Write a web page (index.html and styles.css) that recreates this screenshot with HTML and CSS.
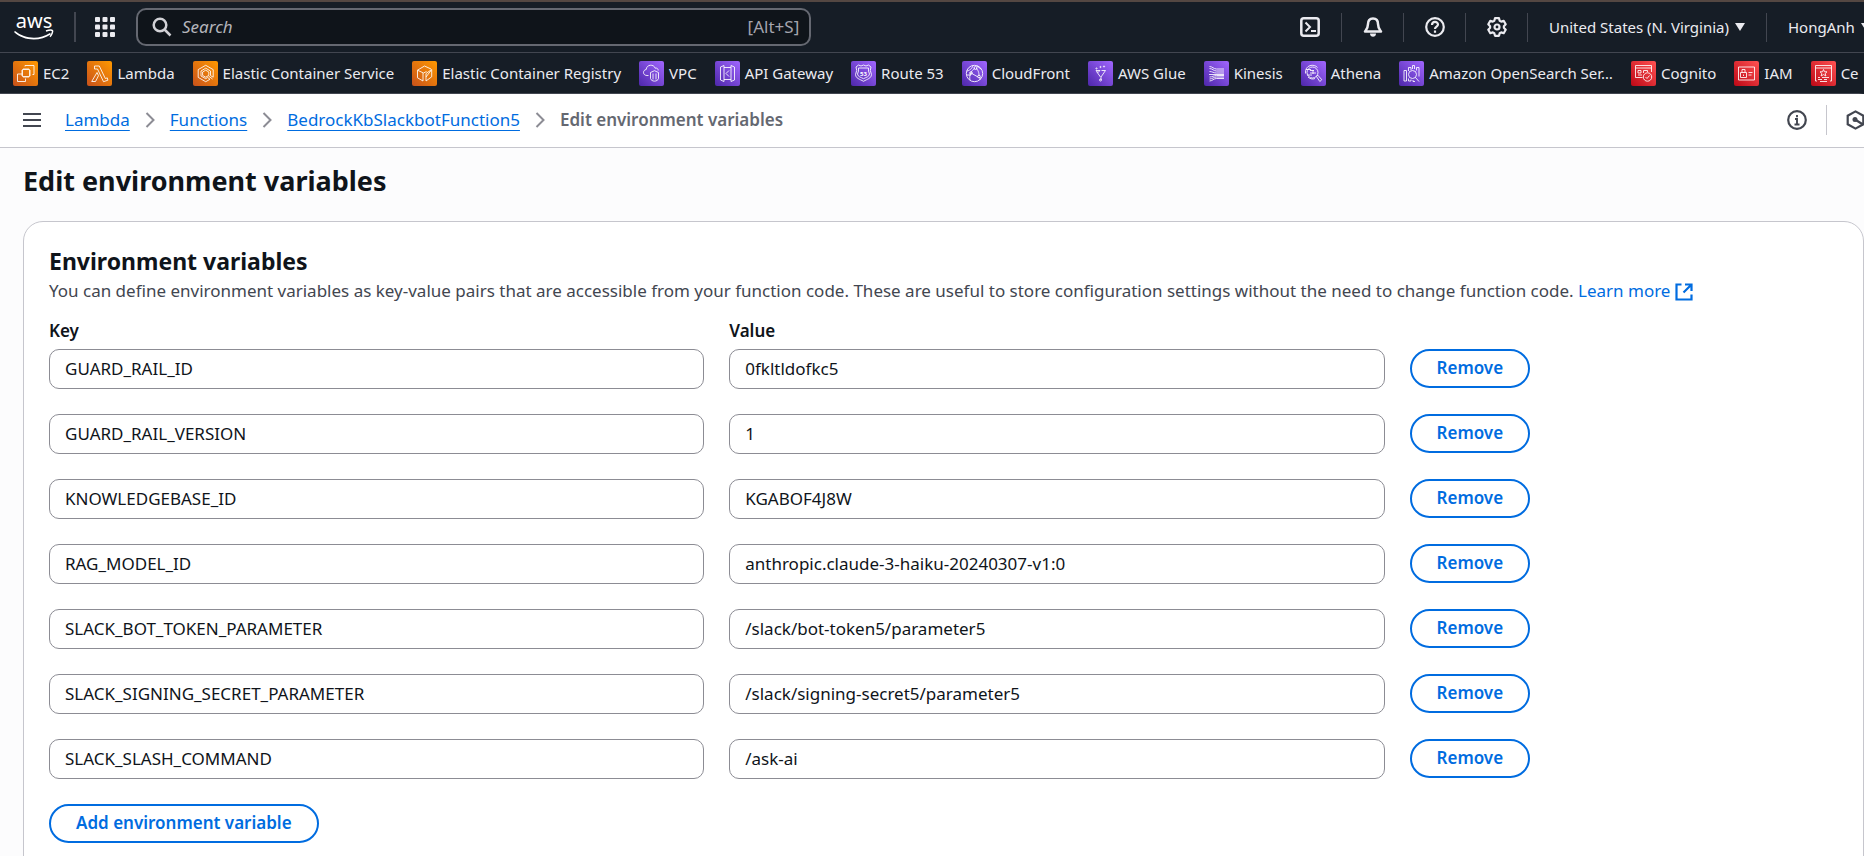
FILE: index.html
```html
<!DOCTYPE html>
<html lang="en">
<head>
<meta charset="utf-8">
<title>Edit environment variables - Lambda</title>
<link rel="stylesheet" href="styles.css">
</head>
<body>
<svg class="defs" aria-hidden="true">
  <defs>
    <linearGradient id="orange" x1="0" y1="1" x2="1" y2="0"><stop offset="0" stop-color="#c8511b"/><stop offset="1" stop-color="#ff9900"/></linearGradient>
    <linearGradient id="purple" x1="0" y1="1" x2="1" y2="0"><stop offset="0" stop-color="#4d27aa"/><stop offset="1" stop-color="#a166ff"/></linearGradient>
    <linearGradient id="red" x1="0" y1="1" x2="1" y2="0"><stop offset="0" stop-color="#bd0816"/><stop offset="1" stop-color="#ff5252"/></linearGradient>
  </defs>
</svg>

<header class="topbar">
  <a class="logo" href="#" aria-label="AWS home">
    <svg width="40" height="30" viewBox="0 0 40 30"><text class="logo-text" x="20" y="16" text-anchor="middle">aws</text><path d="M1 19c10 8 24 9 35 2l1 1.200C26 30 9 29 0 20z" fill="#fff"/><path d="M32 19c3-1 6-1 6.500-.3.500 1-.6 4-2.500 6" fill="none" stroke="#fff" stroke-width="1.500"/></svg>
  </a>
  <button class="services" type="button" aria-label="Services">
    <svg width="20" height="20" viewBox="0 0 20 20" fill="#ebebf0"><rect width="5" height="5" rx="1"/><rect x="7.500" width="5" height="5" rx="1"/><rect x="15" width="5" height="5" rx="1"/><rect y="7.500" width="5" height="5" rx="1"/><rect x="7.500" y="7.500" width="5" height="5" rx="1"/><rect x="15" y="7.500" width="5" height="5" rx="1"/><rect y="15" width="5" height="5" rx="1"/><rect x="7.500" y="15" width="5" height="5" rx="1"/><rect x="15" y="15" width="5" height="5" rx="1"/></svg>
  </button>
  <label class="search">
    <svg width="20" height="20" viewBox="0 0 20 20" fill="none" stroke="#d1d1d6" stroke-width="2.500"><circle cx="8" cy="8" r="6.300"/><path d="M12.500 12.500l6 6"/></svg>
    <input type="text" placeholder="Search" aria-label="Search">
    <span class="hint">[Alt+S]</span>
  </label>
  <nav class="tools">
    <button type="button" aria-label="CloudShell"><svg width="20" height="20" viewBox="0 0 20 20" fill="none" stroke="#ebebf0" stroke-width="2.500"><rect x="1.300" y="1.300" width="17.400" height="17.400" rx="2.500"/><path d="M5.500 5.500l4.500 4.500-4.500 4.500M11 14h5" stroke-width="2"/></svg></button>
    <button type="button" aria-label="Notifications"><svg width="20" height="20" viewBox="0 0 20 20" fill="none" stroke="#ebebf0" stroke-width="2.500" stroke-linejoin="round"><path d="M10 1.500c-3.600 0-5 2.500-5 5.500 0 4-1.500 5.500-3 7.500h16c-1.500-2-3-3.500-3-7.500 0-3-1.400-5.500-5-5.500z"/><path d="M7 16.500h6c0 4.300-6 4.300-6 0z" fill="#ebebf0" stroke="none"/></svg></button>
    <button type="button" aria-label="Help"><svg width="20" height="20" viewBox="0 0 20 20" fill="none" stroke="#ebebf0" stroke-width="2.200"><circle cx="10" cy="10" r="8.800"/><path d="M7 8c0-4 6-4 6-.5 0 2.200-3 2-3 4.500"/><path d="M10 13.500v2.300"/></svg></button>
    <button type="button" aria-label="Settings"><svg width="20" height="20" viewBox="0 0 20 20" fill="none" stroke="#ebebf0" stroke-width="2.200" stroke-linejoin="round"><path d="M8 1.200h4l.7 2.600 1.500.8 2.500-.8 2 3.400-1.800 2v1.600l1.800 2-2 3.400-2.500-.8-1.500.8-.7 2.600H8l-.7-2.600-1.500-.8-2.500.8-2-3.400 1.800-2V9.200l-1.800-2 2-3.400 2.500.8 1.500-.8z"/><circle cx="10" cy="10" r="2.500"/></svg></button>
    <button type="button" class="region">United States (N. Virginia)<svg width="10" height="8" viewBox="0 0 10 8"><path d="M0 0h10L5 8z" fill="#ebebf0"/></svg></button>
    <button type="button" class="account">HongAnh<svg width="10" height="8" viewBox="0 0 10 8"><path d="M0 0h10L5 8z" fill="#ebebf0"/></svg></button>
  </nav>
</header>

<nav class="favorites" aria-label="Favorites">
  <a href="#"><svg class="svc" viewBox="0 0 25 25"><rect width="25" height="25" rx="2" fill="url(#orange)"/><path d="M12 5.500V4.500h9v9h-1.500M9.500 13H4.500v7.500h8v-3M9.500 8.500h7v7h-7zM11 8.500V7M13 8.500V7M15 8.500V7M11 17v-1.500M13 17v-1.500M15 17v-1.500M8 10h1.500M8 12h1.500M8 14h1.500M16.500 10H18M16.500 12H18M16.500 14H18"/></svg>EC2</a>
  <a href="#"><svg class="svc" viewBox="0 0 25 25"><rect width="25" height="25" rx="2" fill="url(#orange)"/><path d="M7.500 5h4.800l6 12.500 2-.6.600 2.300-4.400 1.500-6-12.700H7.500zM10 11.500l1.500 3.200-3 5.800H4.700z"/></svg>Lambda</a>
  <a href="#"><svg class="svc" viewBox="0 0 25 25"><rect width="25" height="25" rx="2" fill="url(#orange)"/><path d="M17 18.300l-4.300 2.400-7.500-4.300V8.600l7.500-4.300 7.500 4.300v7.600l-2.700-1.600V10L12.700 7.200 8 10v5l4.700 2.700 2-1.200zM12.700 9.200l3.100 1.800v3.400l-3.100 1.800-3.100-1.800V11zM15.500 15l4 3"/></svg>Elastic Container Service</a>
  <a href="#"><svg class="svc" viewBox="0 0 25 25"><rect width="25" height="25" rx="2" fill="url(#orange)"/><path d="M11 20l-5.500-3.200V9.200l7-4.200 6.500 3M5.500 9.200l6 2.800 3-1.500M11 20v-8M19.700 8.500v7.300L14 20v-7.500zM19 9.500L14 16"/></svg>Elastic Container Registry</a>
  <a href="#"><svg class="svc" viewBox="0 0 25 25"><rect width="25" height="25" rx="2" fill="url(#purple)"/><path d="M9.500 14.500H8c-4.500 0-4.500-5.500-.8-6 .3-5.200 7.600-5.700 9-1.300 2-.5 3 .8 3 2.300M11.500 11.500l4-1.800 4 1.800v6c-1 3.500-7 3.500-8 0zM14 12.500v6M17 12.500v6"/></svg>VPC</a>
  <a href="#"><svg class="svc" viewBox="0 0 25 25"><rect width="25" height="25" rx="2" fill="url(#purple)"/><path d="M9 4.500v16l-3.500-1.500V6zM16 4.500v16l3.500-1.500V6zM9 6.500h7M9 18.500h7M14 9.500l-3 3 3 3" /></svg>API Gateway</a>
  <a href="#"><svg class="svc" viewBox="0 0 25 25"><rect width="25" height="25" rx="2" fill="url(#purple)"/><path d="M5 6l2.500-2 2.500 1 2.500-1 2.500 1 2.500-1L20 6l-.7 3.500 1.200 4c-.3 4-4 4.500-8 6.800-4-2.300-7.700-2.800-8-6.800l1.200-4zM7.500 7h10v3l1 3c-.5 3-3 3-6 4.700-3-1.700-5.500-1.700-6-4.700l1-3z"/><text class="badge" x="12.500" y="14.500" text-anchor="middle">53</text></svg>Route 53</a>
  <a href="#"><svg class="svc" viewBox="0 0 25 25"><rect width="25" height="25" rx="2" fill="url(#purple)"/><circle cx="12.500" cy="12.500" r="8.200"/><path d="M5 10c4-1 5-3 6-5.500M13 7c-4 3-6 7-5 12M14 7c3 3 3 6 3 8M9 12l7 4M5 14h4M18 16v3M15 5l4 3"/><circle cx="13.500" cy="7" r="1.500"/><circle cx="9" cy="12" r="1.300"/><circle cx="17" cy="15.500" r="1.300"/></svg>CloudFront</a>
  <a href="#"><svg class="svc" viewBox="0 0 25 25"><rect width="25" height="25" rx="2" fill="url(#purple)"/><path d="M8 9.500h4l-2 2zM13.500 9.500h4L13 16v3M8.500 10.500l4 5.500"/><circle cx="8.500" cy="7.500" r=".6"/><circle cx="12.500" cy="6" r=".6"/><circle cx="16" cy="5.500" r=".6"/><circle cx="12.500" cy="19" r="1"/></svg>AWS Glue</a>
  <a href="#"><svg class="svc" viewBox="0 0 25 25"><rect width="25" height="25" rx="2" fill="url(#purple)"/><path d="M5.500 5.500c3 0 4 2.500 7 2.500h7.500M5.500 7.500c3 0 4 2.500 7 2.500h7.500M5.500 10.500c3 0 4 1.500 7 1.500h7.500M5 13.500h15M5.500 16c3 0 4-1.500 7-1.500h7.500M5.500 18c3 0 4-2 7-2h7.500M5.500 20c3 0 4-2.500 7-2.500h7.500"/></svg>Kinesis</a>
  <a href="#"><svg class="svc" viewBox="0 0 25 25"><rect width="25" height="25" rx="2" fill="url(#purple)"/><circle cx="11.500" cy="11.500" r="5.500"/><path d="M15.500 15.500l1.300-1.300 4 4.500-2 1.800zM4.500 12.500c-1-9 9-10 12-6M7 16c2 2 5 2.500 7 1.500M5 8.500h5M6 14h5M9 9.500h4M12 9v4M9 12h6"/></svg>Athena</a>
  <a href="#"><svg class="svc" viewBox="0 0 25 25"><rect width="25" height="25" rx="2" fill="url(#purple)"/><circle cx="13.500" cy="13.500" r="4"/><path d="M16.500 16.500l3.500 4M5 9.500h2.500V20H5zM9.500 10V6.500H12V9M13.500 8V4.500h2V8M17.500 9.500v-3h2.500v9M9.500 17.500V20H12v-1.500M14 19v1.500h2"/></svg>Amazon OpenSearch Ser…</a>
  <a href="#"><svg class="svc" viewBox="0 0 25 25"><rect width="25" height="25" rx="2" fill="url(#red)"/><path d="M11.500 16.500h-7v-12h16v6.500M4.500 7h16M7 9.500h3V12H7zM7 14h4M12.500 12V9.500h4V11"/><circle cx="16.500" cy="16" r="4.200"/><path d="M14.500 16l1.500 1.500 2.500-3"/></svg>Cognito</a>
  <a href="#"><svg class="svc" viewBox="0 0 25 25"><rect width="25" height="25" rx="2" fill="url(#red)"/><path d="M4.500 6h16v13h-16zM6.500 11.500h6v5h-6zM8 11.500v-3h3v3M9.500 13.500v1.500M14.500 11.500h4M14.500 14h3"/></svg>IAM</a>
  <a href="#"><svg class="svc" viewBox="0 0 25 25"><rect width="25" height="25" rx="2" fill="url(#red)"/><path d="M6 20H4.500V4.500h16V20H19M4.500 7h16M12.500 8.500l1 2.300h2.500l-1.800 1.700.7 2.500-2.400-1.400-2.400 1.400.7-2.500L9 10.800h2.500zM7 16.500h2M11 16.500h7M7 18.500h4M13 18.500h3M9 20.500h7"/></svg>Certificate Manager</a>
</nav>

<div class="crumbbar">
  <button type="button" class="menu" aria-label="Open navigation"><svg width="18" height="16" viewBox="0 0 18 16" stroke="#424650" stroke-width="2"><path d="M0 2h18M0 8h18M0 14h18"/></svg></button>
  <nav class="crumbs" aria-label="Breadcrumbs">
    <a href="#">Lambda</a>
    <svg width="10" height="16" viewBox="0 0 10 16"><path d="M1.500 1L8.500 8l-7 7"/></svg>
    <a href="#">Functions</a>
    <svg width="10" height="16" viewBox="0 0 10 16"><path d="M1.500 1L8.500 8l-7 7"/></svg>
    <a href="#">BedrockKbSlackbotFunction5</a>
    <svg width="10" height="16" viewBox="0 0 10 16"><path d="M1.500 1L8.500 8l-7 7"/></svg>
    <span class="current">Edit environment variables</span>
  </nav>
  <div class="panel-tools">
    <button type="button" aria-label="Info"><svg width="20" height="20" viewBox="0 0 20 20" fill="none" stroke="#424650" stroke-width="2.200"><circle cx="10" cy="10" r="8.800"/><path d="M10 5v2.200M8 9h2v5.500M7.500 14.500h5" stroke-width="1.900"/></svg></button>
    <button type="button" class="diag" aria-label="Diagnostics"><svg width="20" height="20" viewBox="0 0 20 20" fill="none" stroke="#424650" stroke-width="2.200"><path d="M9.500 1.400l7.800 4.300v8.600l-7.800 4.300-7.800-4.300V5.700z"/><circle cx="9" cy="9.500" r="2.500" fill="#424650" stroke="none"/><path d="M9 9.500l8 5"/></svg></button>
  </div>
</div>

<main class="page">
  <h1>Edit environment variables</h1>
  <section class="card">
    <h2>Environment variables</h2>
    <p class="desc">You can define environment variables as key-value pairs that are accessible from your function code. These are useful to store configuration settings without the need to change function code. <a href="#">Learn more<svg width="18" height="18" viewBox="0 0 18 18" fill="none" stroke="#006ce0" stroke-width="2.200"><path d="M6.500 1.500h-5v15h15v-5M10 1.500h6.500V8M16 2L8.500 9.500"/></svg></a></p>
    <form class="vars">
      <label class="col" for="k1">Key</label><label class="col" for="v1">Value</label>
      <div class="row"><input id="k1" type="text" value="GUARD_RAIL_ID"><input id="v1" type="text" value="0fkltldofkc5"><div><button type="button" class="btn">Remove</button></div></div>
      <div class="row"><input aria-label="Key 2" type="text" value="GUARD_RAIL_VERSION"><input aria-label="Value 2" type="text" value="1"><div><button type="button" class="btn">Remove</button></div></div>
      <div class="row"><input aria-label="Key 3" type="text" value="KNOWLEDGEBASE_ID"><input aria-label="Value 3" type="text" value="KGABOF4J8W"><div><button type="button" class="btn">Remove</button></div></div>
      <div class="row"><input aria-label="Key 4" type="text" value="RAG_MODEL_ID"><input aria-label="Value 4" type="text" value="anthropic.claude-3-haiku-20240307-v1:0"><div><button type="button" class="btn">Remove</button></div></div>
      <div class="row"><input aria-label="Key 5" type="text" value="SLACK_BOT_TOKEN_PARAMETER"><input aria-label="Value 5" type="text" value="/slack/bot-token5/parameter5"><div><button type="button" class="btn">Remove</button></div></div>
      <div class="row"><input aria-label="Key 6" type="text" value="SLACK_SIGNING_SECRET_PARAMETER"><input aria-label="Value 6" type="text" value="/slack/signing-secret5/parameter5"><div><button type="button" class="btn">Remove</button></div></div>
      <div class="row"><input aria-label="Key 7" type="text" value="SLACK_SLASH_COMMAND"><input aria-label="Value 7" type="text" value="/ask-ai"><div><button type="button" class="btn">Remove</button></div></div>
    </form>
    <button type="button" class="btn">Add environment variable</button>
  </section>
</main>
</body>
</html>
```
FILE: styles.css
```css
* { box-sizing: border-box; }
html { height: 100%; overflow: hidden; }
body {
  margin: 0;
  height: 100%;
  overflow: hidden;
  border-top: 2px solid #544742;
  background: #fcfcfd;
  color: #0f141a;
  font: 17px/24px "Noto Sans", "Open Sans", sans-serif;
}
button, input { font: inherit; color: inherit; }
button { padding: 0; border: 0; background: none; }
svg { display: block; flex: none; }
.defs { position: absolute; width: 0; height: 0; }

.topbar {
  display: flex;
  align-items: center;
  height: 51px;
  padding-left: 14px;
  overflow: hidden;
  border-bottom: 1px solid #424650;
  background: #161d26;
  color: #ebebf0;
}
.logo { padding-right: 20px; border-right: 2px solid #424650; }
.logo svg { overflow: visible; }
.logo-text { font: 20px "Noto Sans", sans-serif; fill: #fff; }
.services { margin: 0 21px 0 19px; }
.search {
  display: flex;
  align-items: center;
  gap: 10px;
  width: 36.5%;
  height: 38px;
  padding: 0 10px 0 14px;
  border: 2px solid #656871;
  border-radius: 10px;
  background: #0f141a;
}
.search input {
  flex: 1;
  min-width: 0;
  padding: 0;
  border: 0;
  background: none;
  color: #ebebf0;
}
.search input::placeholder { color: #b4b4bb; font-style: italic; opacity: 1; }
.hint { color: #a4a4ad; }
.tools {
  display: flex;
  align-items: center;
  margin: 0 -8px 0 auto;
  font-size: 15px;
}
.tools button {
  display: flex;
  align-items: center;
  justify-content: center;
  gap: 6px;
  width: 62px;
  height: 29px;
  border-left: 1px solid #424650;
}
.tools button:first-child { border-left: 0; }
.tools .region { width: 239px; }
.tools .account { width: 106px; justify-content: flex-start; padding-left: 21px; }

.favorites {
  display: flex;
  align-items: center;
  gap: 18px;
  height: 41px;
  padding-left: 13px;
  overflow: hidden;
  border-bottom: 1px solid #424650;
  border-right: 5px solid #161d26;
  background: #161d26;
  font-size: 15px;
}
.favorites a {
  display: flex;
  flex: none;
  align-items: center;
  gap: 5px;
  color: #ebebf0;
  text-decoration: none;
  white-space: nowrap;
}
.svc { width: 25px; height: 25px; fill: none; stroke: #fff; stroke-width: 1; stroke-opacity: .85; }
.svc rect { stroke: none; }
.badge { font: bold 6px "Noto Sans", sans-serif; fill: #fff; stroke: none; }

.crumbbar {
  display: flex;
  align-items: center;
  height: 54px;
  padding: 0 0 2px 23px;
  overflow: hidden;
  border-bottom: 1px solid #c6c6cd;
  background: #fff;
}
.crumbs { display: flex; align-items: center; gap: 15px; margin-left: 24px; }
.crumbs a { color: #006ce0; text-decoration: underline; text-decoration-thickness: 1px; text-underline-offset: 4px; }
.crumbs svg { fill: none; stroke: #8c8c94; stroke-width: 2; }
.current { color: #656871; font-weight: 600; }
.panel-tools { display: flex; align-items: center; margin: 0 -2px 0 auto; }
.panel-tools .diag { margin-left: 19px; padding: 5px 0 5px 19px; border-left: 1px solid #c6c6cd; }

.page { padding: 14px 0 0 23px; }
h1 { margin: 0; font-size: 27px; line-height: 38px; }
.card {
  margin-top: 21px;
  padding: 24px 25px 50px;
  border: 1px solid #c6c6cd;
  border-radius: 20px;
  background: #fff;
}
h2 { margin: 0; font-size: 23px; line-height: 30px; }
.desc { margin: 0; color: #424650; line-height: 30px; white-space: nowrap; }
.desc a { color: #006ce0; text-decoration: none; }
.desc svg { display: inline-block; margin-left: 5px; vertical-align: -4px; }
.vars { display: grid; grid-template-columns: repeat(8, 1fr); column-gap: 25px; margin-top: 13px; }
.col { grid-column: span 3; margin-bottom: 6px; font-weight: 600; line-height: 24px; }
.row { display: grid; grid-column: 1 / -1; grid-template-columns: subgrid; margin-bottom: 25px; }
.row input {
  grid-column: span 3;
  height: 40px;
  min-width: 0;
  padding: 0 15px 2px;
  border: 1px solid #8c8c94;
  border-radius: 10px;
  background: #fff;
}
.row div { grid-column: span 2; }
.btn {
  height: 39px;
  padding: 0 25px 1px;
  border: 2px solid #006ce0;
  border-radius: 20px;
  background: #fff;
  color: #006ce0;
  font-weight: 600;
}
```
